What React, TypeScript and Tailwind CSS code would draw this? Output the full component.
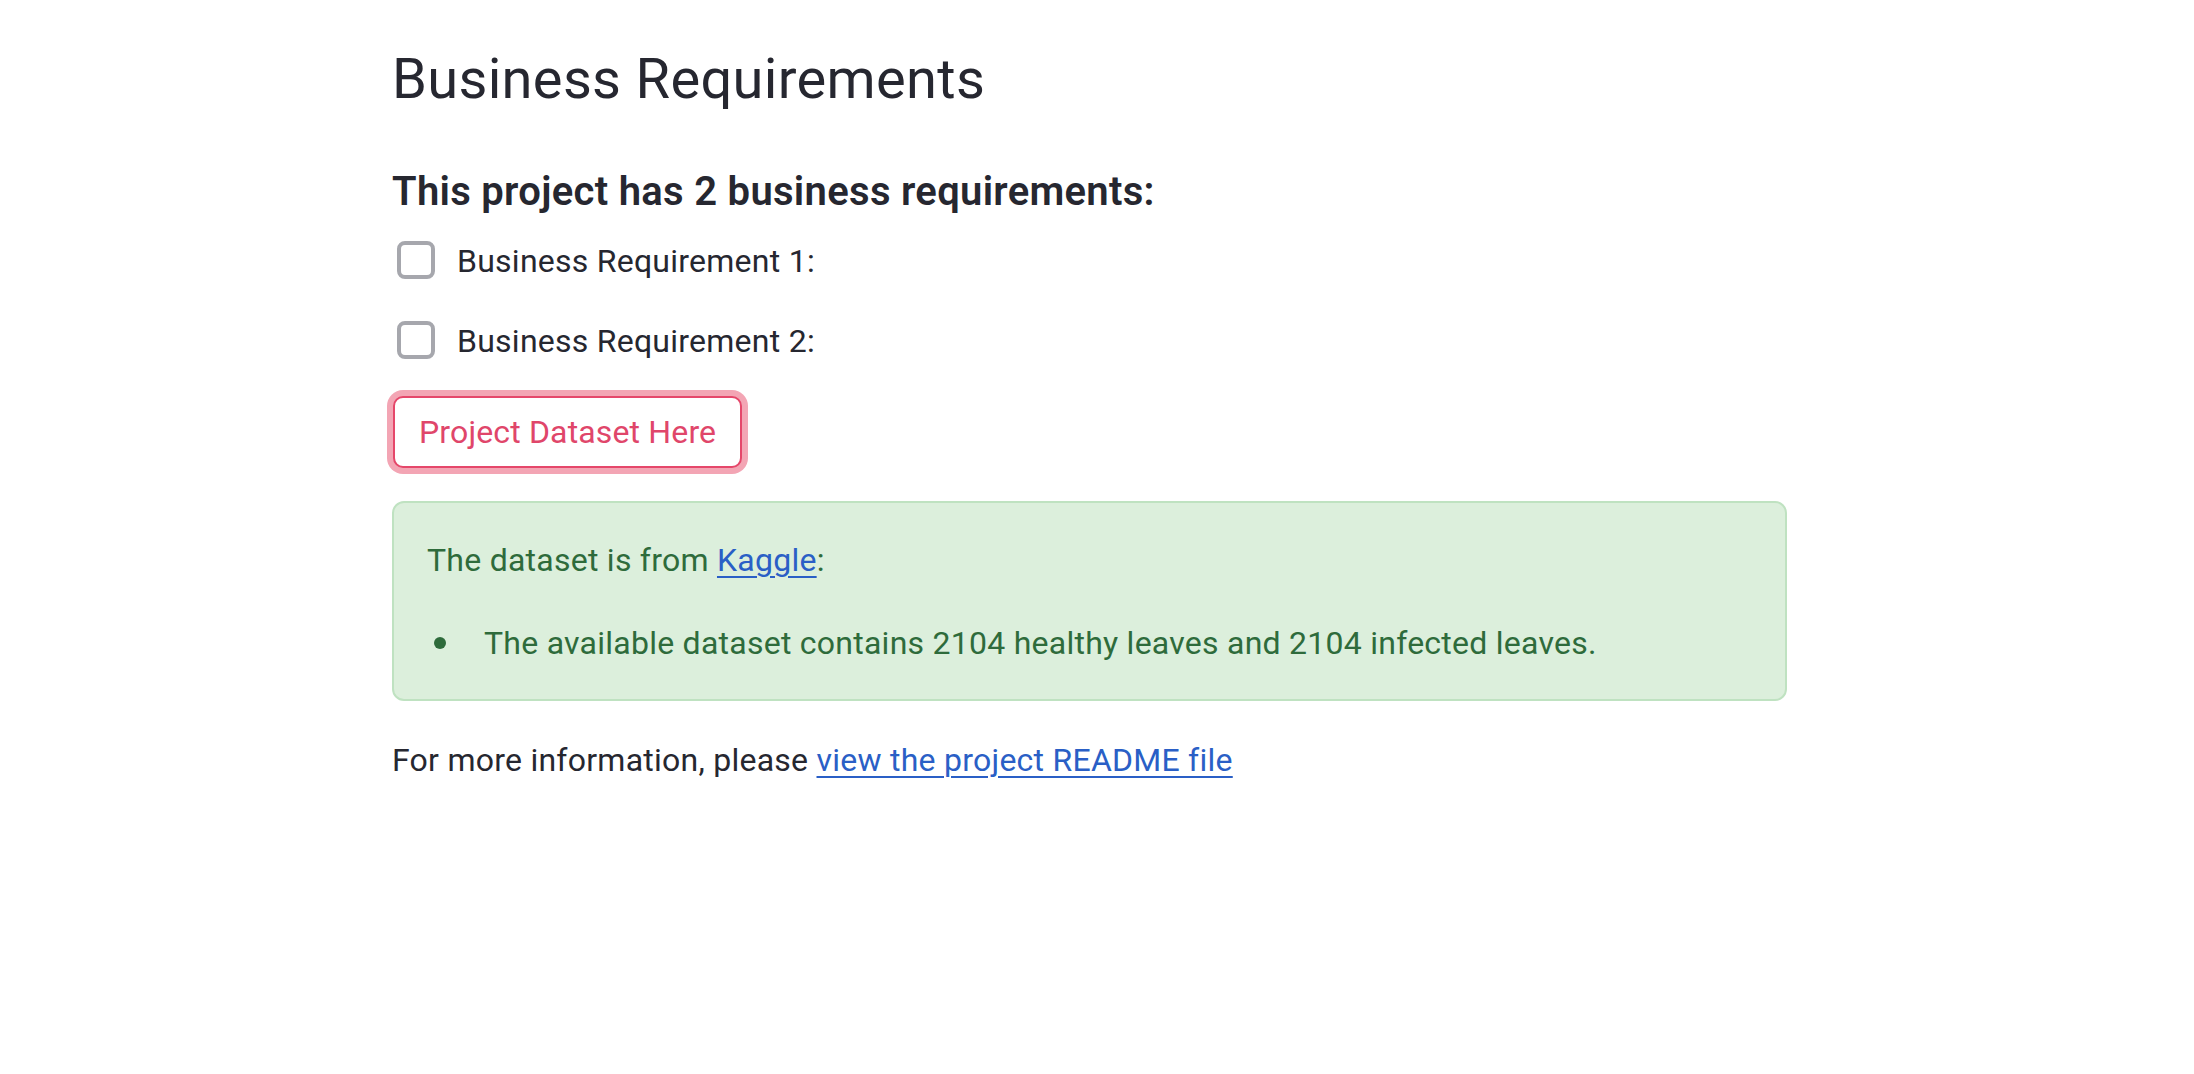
import React from "react";

const font = { fontFamily: "Roboto, 'Noto Sans', sans-serif" };

function Checkbox({ label }: { label: string }) {
  return (
    <label className="flex items-start h-[48px] cursor-pointer">
      <span className="mt-[4px] ml-[5px] w-[38px] h-[38px] shrink-0 rounded-[8px] border-[4px] border-[#a6a7ad] bg-white" />
      <span className="ml-[22px] text-[32px] leading-[48px] tracking-[0.25px] text-[#262730]">{label}</span>
    </label>
  );
}

export default function App() {
  return (
    <div className="min-h-screen bg-white" style={font}>
      <div className="ml-[392px] w-[1395px] pt-[43px] flex flex-col">
        <h1 className="text-[56px] leading-[72px] tracking-[0.33px] font-normal text-[#262730]">Business Requirements</h1>
        <h4 className="mt-[49px] text-[40px] leading-[56px] tracking-[0.3px] font-semibold text-[#262730]">
          This project has 2 business requirements:
        </h4>
        <div className="mt-[17px] flex flex-col gap-[32px]">
          <Checkbox label="Business Requirement 1:" />
          <Checkbox label="Business Requirement 2:" />
        </div>
        <div className="mt-[31px]">
          <button className="ml-[1px] rounded-[10px] border-[2px] border-[#e5476a] bg-white px-[24px] py-[10px] text-[32px] leading-[48px] tracking-[0.15px] text-[#e0466a] ring-[6px] ring-[#f3a5b4]">
            Project Dataset Here
          </button>
        </div>
        <div className="mt-[33px] rounded-[12px] border-[2px] border-[#bfe2c1] bg-[#dcefdc] pl-[33px] pr-[33px] pt-[33px] pb-[32px] text-[32px] leading-[48px] tracking-[0.25px] text-[#2e6b3b]">
          <p>
            The dataset is from{" "}
            <a href="#" className="text-[#2a5fc6] underline underline-offset-[5px] decoration-[2px]">Kaggle</a>:
          </p>
          <ul className="mt-[35px] flex flex-col">
            <li className="flex items-center">
              <span className="ml-[7px] w-[12px] h-[12px] rounded-full bg-[#2e6b3b] shrink-0" />
              <span className="ml-[38px]">
                The available dataset contains 2104 healthy leaves and 2104 infected leaves.
              </span>
            </li>
          </ul>
        </div>
        <p className="mt-[35px] text-[32px] leading-[48px] tracking-[0.25px] text-[#262730]">
          For more information, please{" "}
          <a href="#" className="text-[#2a5fc6] underline underline-offset-[5px] decoration-[2px]">view the project README file</a>
        </p>
      </div>
    </div>
  );
}
